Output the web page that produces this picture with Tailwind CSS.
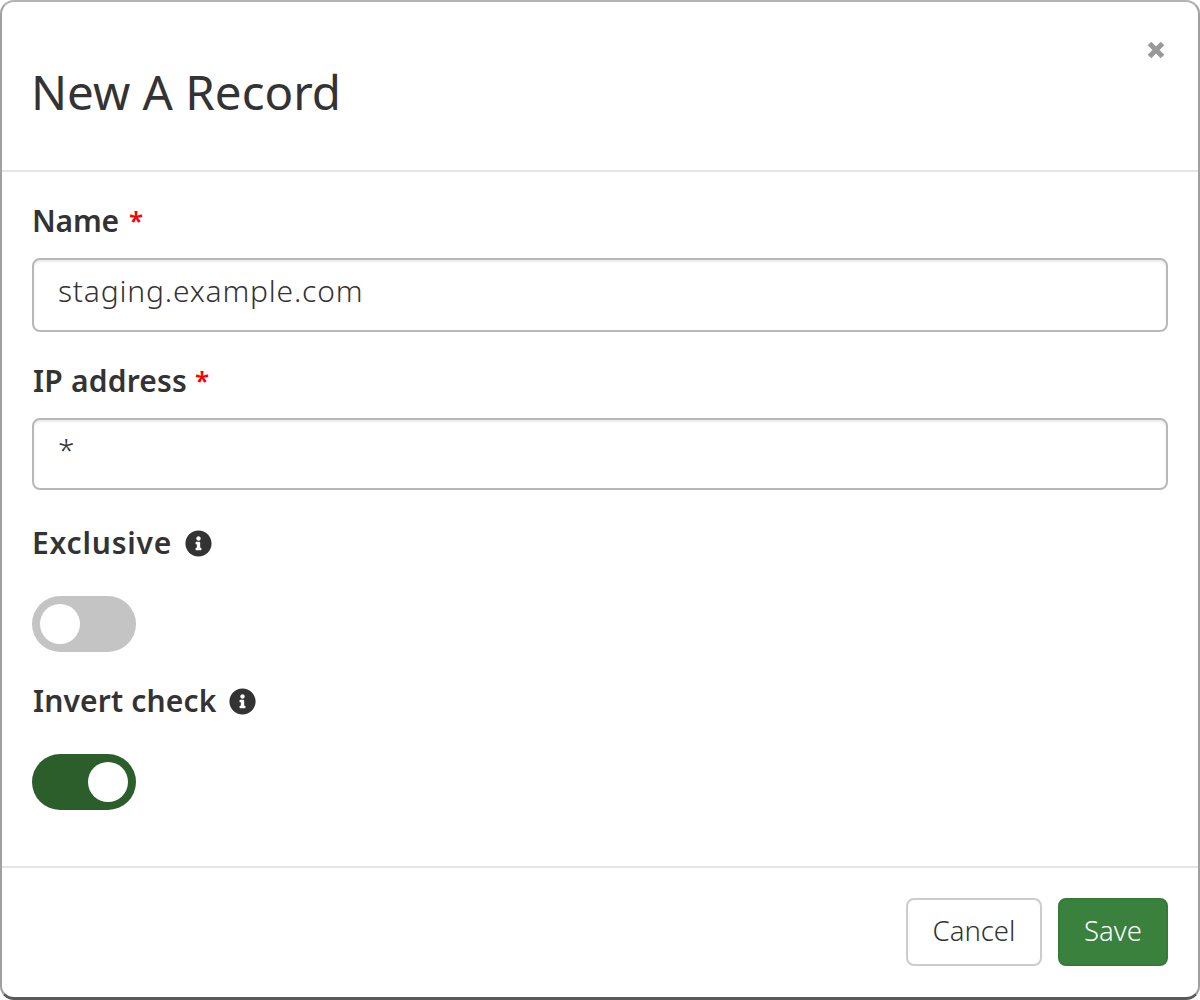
<!DOCTYPE html>
<html lang="en">
<head>
    <meta charset="UTF-8">
    <meta name="viewport" content="width=device-width, initial-scale=1.0">
    <title>New A Record</title>
    <script src="https://cdn.jsdelivr.net/npm/@tailwindcss/browser@4"></script>
</head>
<body class="bg-white font-['Noto_Sans',sans-serif] text-[#333]">
    <div class="w-[1200px] h-[1000px] flex flex-col bg-white rounded-[14px] border-2 border-t-[#b3b3b3] border-x-[#a0a0a0] border-b-[3px] border-b-[#5a5a5a] overflow-hidden">
        <!-- Header -->
        <div class="relative h-[170px] border-b-2 border-[#e5e5e5] pl-[29px] flex items-center shrink-0">
            <h4 class="text-[47.5px] leading-none pt-[12px]">New A Record</h4>
            <svg class="absolute right-[33px] top-[39px] w-[18px] h-[18px]" viewBox="0 0 18 18"><path d="M2.5 2.5L15.5 15.5M15.5 2.5L2.5 15.5" stroke="#999" stroke-width="5.2"/></svg>
        </div>

        <!-- Body -->
        <div class="flex-1 px-[31px] pt-[31px]">
            <label class="flex items-center -ml-px h-[36px] pb-[2px] text-[30px] font-semibold tracking-[-0.2px]">Name<span class="ml-[10px] text-[26px] text-[#f00]">*</span></label>
            <input class="block mt-[19px] -ml-px w-[1136px] h-[74px] px-[24px] pb-[10px] rounded-[8px] border-2 border-[#b8b8b8] text-[30px] font-light tracking-[0.8px] text-[#333] shadow-[inset_0_2px_2px_rgba(0,0,0,0.08)]" value="staging.example.com">

            <label class="flex items-center h-[36px] mt-[31px] pb-[2px] text-[30px] font-semibold tracking-[0.2px]">IP address<span class="ml-[8px] text-[26px] text-[#f00]">*</span></label>
            <input class="block mt-[19px] -ml-px w-[1136px] h-[72px] px-[24px] pb-[9px] rounded-[8px] border-2 border-[#b8b8b8] text-[30px] font-light text-[#333] shadow-[inset_0_2px_2px_rgba(0,0,0,0.08)]" value="*">

            <label class="flex items-center -ml-px h-[36px] mt-[35px] pb-[2px] text-[30px] font-semibold tracking-[0.8px]">Exclusive
                <svg class="ml-[13px] mt-[2px] w-[27px] h-[27px] fill-[#333]" viewBox="0 0 512 512"><path d="M256 8C119.043 8 8 119.083 8 256c0 136.997 111.043 248 248 248s248-111.003 248-248C504 119.083 392.957 8 256 8zm0 110c23.196 0 42 18.804 42 42s-18.804 42-42 42-42-18.804-42-42 18.804-42 42-42zm56 254c0 6.627-5.373 12-12 12h-88c-6.627 0-12-5.373-12-12v-24c0-6.627 5.373-12 12-12h12v-64h-12c-6.627 0-12-5.373-12-12v-24c0-6.627 5.373-12 12-12h64c6.627 0 12 5.373 12 12v100h12c6.627 0 12 5.373 12 12v24z"/></svg>
            </label>
            <div class="mt-[35px] -ml-px w-[104px] h-[56px] rounded-full bg-[#c4c4c4] flex items-center justify-start px-[8px]">
                <span class="w-[40px] h-[40px] rounded-full bg-white"></span>
            </div>

            <label class="flex items-center h-[36px] mt-[31px] pb-[2px] text-[30px] font-semibold tracking-[0.15px]">Invert check
                <svg class="ml-[13px] mt-[2px] w-[27px] h-[27px] fill-[#333]" viewBox="0 0 512 512"><path d="M256 8C119.043 8 8 119.083 8 256c0 136.997 111.043 248 248 248s248-111.003 248-248C504 119.083 392.957 8 256 8zm0 110c23.196 0 42 18.804 42 42s-18.804 42-42 42-42-18.804-42-42 18.804-42 42-42zm56 254c0 6.627-5.373 12-12 12h-88c-6.627 0-12-5.373-12-12v-24c0-6.627 5.373-12 12-12h12v-64h-12c-6.627 0-12-5.373-12-12v-24c0-6.627 5.373-12 12-12h64c6.627 0 12 5.373 12 12v100h12c6.627 0 12 5.373 12 12v24z"/></svg>
            </label>
            <div class="mt-[35px] -ml-px w-[104px] h-[56px] rounded-full bg-[#2b5e2b] flex items-center justify-end px-[8px]">
                <span class="w-[40px] h-[40px] rounded-full bg-white"></span>
            </div>
        </div>

        <!-- Footer -->
        <div class="h-[131px] shrink-0 border-t-2 border-[#e5e5e5] flex justify-end gap-[16px] pt-[30px] pr-[30px]">
            <button class="w-[136px] h-[68px] pb-[2px] rounded-[8px] border-2 border-[#ccc] bg-white text-[27.5px] font-light text-[#333]">Cancel</button>
            <button class="w-[110px] h-[68px] pb-[2px] rounded-[8px] border-2 border-[#357a38] bg-[#3a813d] text-[27.5px] font-light text-white">Save</button>
        </div>
    </div>
</body>
</html>
